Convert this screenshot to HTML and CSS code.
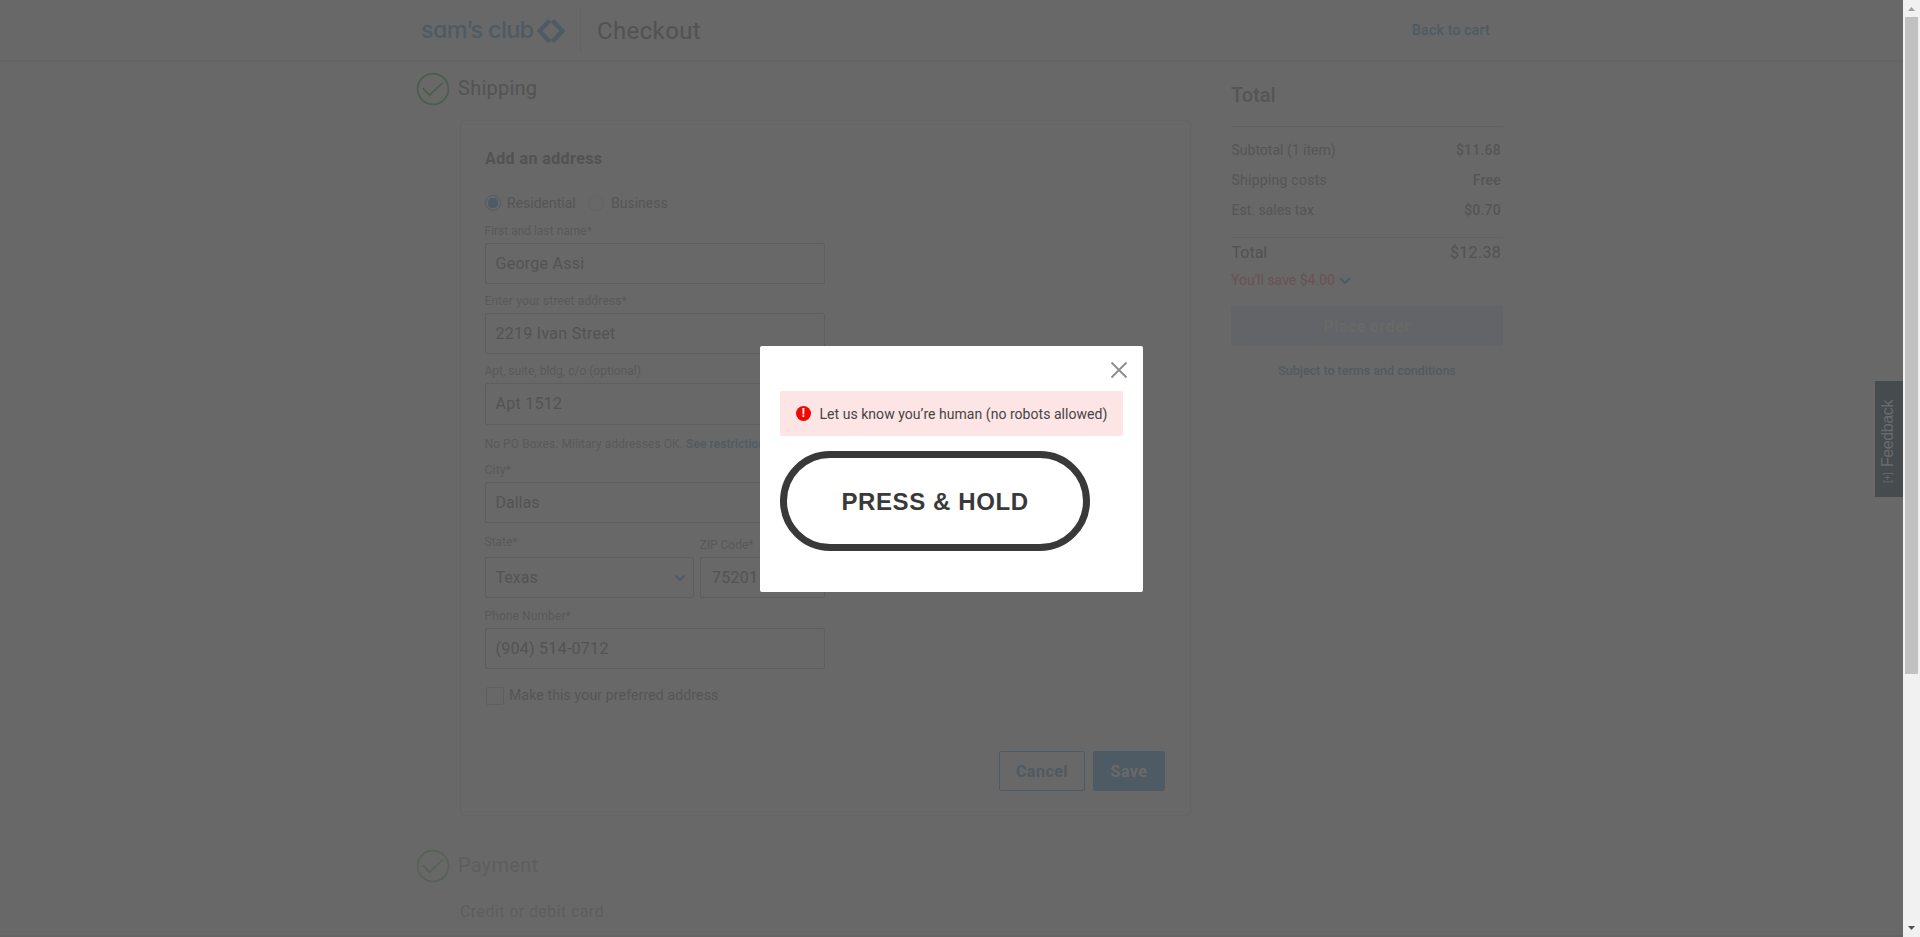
FILE: index.html
```html
<!DOCTYPE html>
<html lang="en">
<head>
<meta charset="utf-8">
<title>Checkout</title>
<link rel="stylesheet" href="styles.css">
</head>
<body>
<div class="window">
<div class="page">
  <header class="header">
    <div class="logo"><span class="logo-text">sam’s club</span>
      <svg class="spark" width="28" height="24" viewBox="0 0 28 24" fill="none" stroke="currentColor" stroke-width="4.4"><path d="M12.600 1.400 2.600 12l10 10.600M15.400 1.400 25.400 12l-10 10.600"/></svg>
    </div>
    <div class="divider"></div>
    <h1 class="title">Checkout</h1>
    <a class="back">Back to cart</a>
  </header>
  <div class="columns">
    <main class="main">
      <div class="step">
        <svg class="check" width="34" height="34" viewBox="0 0 34 34" fill="none" stroke="currentColor" stroke-width="1.7"><circle cx="17" cy="17" r="15.4"/><path d="M7 16.500 13.600 23.200 26.500 11" stroke-linecap="round"/></svg>
        <h2 class="step-title">Shipping</h2>
      </div>
      <section class="card">
        <h3 class="card-title">Add an address</h3>
        <div class="radios">
          <i class="radio radio-on"></i><span class="radio-label">Residential</span>
          <i class="radio"></i><span class="radio-label">Business</span>
        </div>
        <label class="label">First and last name*</label>
        <div class="input">George Assi</div>
        <label class="label next street">Enter your street address*</label>
        <div class="input">2219 Ivan Street</div>
        <label class="label next">Apt, suite, bldg, c/o (optional)</label>
        <div class="input input-tall">Apt 1512</div>
        <p class="note">No PO Boxes. Military addresses OK. <a class="link">See restrictions</a></p>
        <label class="label city">City*</label>
        <div class="input plain">Dallas</div>
        <div class="pair">
          <div class="state">
            <label class="label state-label">State*</label>
            <div class="input select plain">Texas<svg class="chev" width="12" height="8" viewBox="0 0 12 8" fill="none" stroke="currentColor" stroke-width="2"><path d="M1.500 1.500 6 6l4.500-4.500"/></svg></div>
          </div>
          <div class="zip">
            <label class="label">ZIP Code*</label>
            <div class="input">75201</div>
          </div>
        </div>
        <label class="label phone">Phone Number*</label>
        <div class="input">(904) 514-0712</div>
        <div class="prefer"><i class="box"></i>Make this your preferred address</div>
        <div class="actions">
          <button class="btn cancel">Cancel</button>
          <button class="btn save">Save</button>
        </div>
      </section>
      <div class="step payment">
        <svg class="check" width="34" height="34" viewBox="0 0 34 34" fill="none" stroke="currentColor" stroke-width="1.7"><circle cx="17" cy="17" r="15.4"/><path d="M7 16.500 13.600 23.200 26.500 11" stroke-linecap="round"/></svg>
        <h2 class="step-title">Payment</h2>
      </div>
      <p class="credit">Credit or debit card</p>
    </main>
    <aside class="summary">
      <h2 class="sum-title">Total</h2>
      <div class="rows">
        <div class="row"><span>Subtotal (1 item)</span><b>$11.68</b></div>
        <div class="row"><span class="costs">Shipping costs</span><b>Free</b></div>
        <div class="row"><span>Est. sales tax</span><b>$0.70</b></div>
      </div>
      <div class="row grand"><span>Total</span><b>$12.38</b></div>
      <div class="saving"><span>You'll save $4.00</span><svg class="chev2" width="12" height="8" viewBox="0 0 12 8" fill="none" stroke="currentColor" stroke-width="2.200"><path d="M1.200 1.300 6 6l4.800-4.700"/></svg></div>
      <button class="place">Place order</button>
      <a class="terms">Subject to terms and conditions</a>
    </aside>
  </div>
  <div class="feedback"><span class="plus">[+]</span><span>Feedback</span></div>
  <div class="modal">
    <svg class="close" width="18" height="18" viewBox="0 0 18 18" fill="none" stroke="currentColor" stroke-width="1.800"><path d="M1.500 1.500l15 15M16.500 1.500l-15 15"/></svg>
    <div class="alert"><i class="bang">!</i>Let us know you’re human (no robots allowed)</div>
    <button class="hold">PRESS &amp; HOLD</button>
  </div>
</div>
<div class="scrollbar">
  <svg class="arrow up" width="7" height="4" viewBox="0 0 7 4"><path d="M3.500 0 7 4H0z" fill="currentColor"/></svg>
  <div class="thumb"></div>
  <svg class="arrow down" width="7" height="4" viewBox="0 0 7 4"><path d="M0 0h7L3.500 4z" fill="currentColor"/></svg>
</div>
</div>
</body>
</html>
```
FILE: styles.css
```css
* { box-sizing: border-box; }
body { margin: 0; font-family: Roboto, "Liberation Sans", sans-serif; font-size: 14px; line-height: 20px; color: #555; }
h1, h2, h3, p { margin: 0; font-weight: 400; }
button { font: inherit; letter-spacing: inherit; padding: 0; border: 0; background: none; }
i { font-style: normal; }
svg { display: block; flex: none; }

.window { display: flex; width: 1920px; height: 937px; overflow: hidden; }
.page { position: relative; width: 1903px; height: 937px; background: #686868; overflow: hidden; border-bottom: 2px solid #656465; }

.header { display: flex; height: 62px; padding: 0 413px 0 421px; border-bottom: 2px solid #656565; }
.logo { display: flex; justify-content: space-between; width: 144px; margin-right: 15px; color: #4f5b64; }
.logo-text { font: 500 23.500px/28px Inter, sans-serif; font-feature-settings: "cv11" 1; letter-spacing: -0.700px; margin-top: 16px; white-space: nowrap; }
.spark { margin-top: 19px; }
.divider { width: 1px; height: 45px; margin-top: 8px; background: #636363; }
.title { margin: 17px 0 0 16px; font-size: 24px; line-height: 28px; letter-spacing: 0.370px; color: #525252; flex: 1; }
.back { margin-top: 20px; color: #4f5b62; font-weight: 500; letter-spacing: 0.230px; }

.columns { display: flex; padding-left: 416px; }
.main { width: 774px; }
.step { display: flex; padding-top: 10px; }
.check { color: #4b5d4b; }
.step-title { font-size: 20px; line-height: 24px; letter-spacing: 0.250px; margin: 4px 0 0 8px; color: #535353; }
.card { width: 731px; margin: 14px 0 0 44px; padding: 26px 25px 24px 24px; border: 1px solid #646464; border-radius: 5px; }
.card-title { font-size: 16px; line-height: 24px; font-weight: 700; letter-spacing: 0.420px; color: #525252; }
.radios { display: flex; margin-top: 22px; height: 20px; }
.radio { width: 16px; height: 16px; margin-top: 2px; border: 1px solid #626262; border-radius: 50%; }
.radio-on { border-color: #4e5b66; background: radial-gradient(circle, #4e5b66 5px, transparent 5.500px); }
.radio-label { margin: 0 0 0 6px; }
.radio-on + .radio-label { width: 81px; }
.radio-label:last-child { margin-left: 7px; }
.label { display: block; font-size: 12px; line-height: 16px; margin-bottom: 4px; text-indent: -0.500px; color: #595959; }
.radios + .label { margin-top: 10px; }
.next { margin-top: 9px; }
.street { letter-spacing: 0.150px; }
.input { width: 340px; height: 41px; padding-left: 9.500px; border: 1px solid #5e5e5e; border-radius: 2px; font-size: 16px; line-height: 39px; letter-spacing: 0.270px; color: #535353; }
.plain { letter-spacing: 0; }
.input-tall { height: 42px; }
.note { font-size: 12px; line-height: 16px; letter-spacing: 0.080px; text-indent: -0.500px; margin-top: 11px; color: #595959; }
.link { color: #4f5b62; font-weight: 500; }
.city { margin-top: 10px; letter-spacing: 0.200px; }
.pair { display: flex; align-items: flex-end; gap: 6px; margin-top: 11px; }
.state { width: 209px; }
.state-label { margin-bottom: 7px; }
.state .input { width: 209px; }
.zip .input { width: 125px; padding-left: 11px; }
.select { display: flex; justify-content: space-between; padding-right: 7px; }
.chev { margin-top: 16px; color: #4e5b64; }
.phone { margin-top: 10px; letter-spacing: 0.100px; }
.prefer { display: flex; margin-top: 16px; height: 20px; letter-spacing: 0.150px; }
.box { width: 18px; height: 18px; margin: 2px 5px 0 1px; border: 1px solid #5e5e5e; border-radius: 2px; }
.actions { display: flex; justify-content: flex-end; gap: 8px; margin-top: 46px; }
.btn { height: 40px; padding-top: 2px; border: 1px solid #4e5a64; border-radius: 2px; font-size: 16px; font-weight: 700; letter-spacing: 0.500px; }
.cancel { width: 86px; color: #4e5a64; }
.save { width: 72px; background: #4e5a64; color: #6a6a6a; }
.payment { padding-top: 33px; }
.payment .check { color: #566256; }
.payment .step-title { color: #5e5e5e; }
.credit { margin: 17px 0 0 44px; font-size: 16px; line-height: 24px; letter-spacing: 0.410px; color: #5e5e5e; }

.summary { width: 272px; margin: 21px 0 0 41px; }
.sum-title { font-size: 20px; line-height: 24px; font-weight: 500; padding-bottom: 19px; border-bottom: 1px solid #616161; }
.rows { display: grid; gap: 10px; padding: 13px 0 17px; border-bottom: 1px solid #616161; }
.row { display: flex; justify-content: space-between; padding: 0 2px 0 0.500px; }
.row b { font-weight: 500; letter-spacing: 0.230px; }
.costs { letter-spacing: 0.250px; }
.grand { font-size: 16px; line-height: 24px; padding-top: 3px; color: #525252; }
.grand b { font-weight: 400; letter-spacing: 0.300px; }
.saving { display: flex; gap: 4px; margin-top: 5px; color: #6b5054; }
.chev2 { margin-top: 7px; color: #4e5b64; }
.place { display: block; width: 272px; height: 40px; margin-top: 16px; padding-top: 2px; background: #626468; border-radius: 2px; font-size: 16px; font-weight: 700; letter-spacing: 0.430px; color: #686967; }
.terms { display: block; margin-top: 15px; text-align: center; font-size: 12.500px; font-weight: 500; color: #4f5b62; }

.feedback { position: absolute; right: 0; top: 381px; width: 28px; height: 116px; background: #464c4e; color: #686b6c; writing-mode: vertical-rl; transform: rotate(180deg); display: flex; align-items: center; gap: 6px; padding: 14px 0 0 3px; font: 16px/18px "Liberation Sans", sans-serif; letter-spacing: -0.400px; }
.plus { font-size: 10px; }

.modal { position: absolute; left: 760px; top: 346px; width: 383px; height: 246px; padding: 15px 20px; background: #fff; border-radius: 2px; }
.close { margin-left: 330px; color: #8c8c8c; }
.alert { display: flex; align-items: center; height: 45px; margin-top: 12px; padding-left: 16px; background: #fde5e5; border-radius: 2px; color: #444; white-space: nowrap; letter-spacing: 0.040px; }
.bang { width: 15px; height: 15px; margin-right: 8.500px; border-radius: 50%; background: #ee0a00; color: #fff; font-size: 12px; font-weight: 700; line-height: 15px; text-align: center; }
.hold { width: 310px; height: 100px; margin-top: 15px; padding-top: 2px; border: 7px solid #393939; border-radius: 50px; color: #393939; font: 700 24px/30px "Liberation Sans", sans-serif; letter-spacing: 0.600px; }

.scrollbar { display: flex; flex-direction: column; width: 17px; background: #f1f1f1; }
.arrow { margin-left: 5px; }
.up { margin-top: 7px; color: #a0a0a0; }
.down { margin-top: 252px; color: #505050; }
.thumb { width: 13px; height: 657px; margin: 6px 0 0 2px; background: #c1c1c1; }
```
